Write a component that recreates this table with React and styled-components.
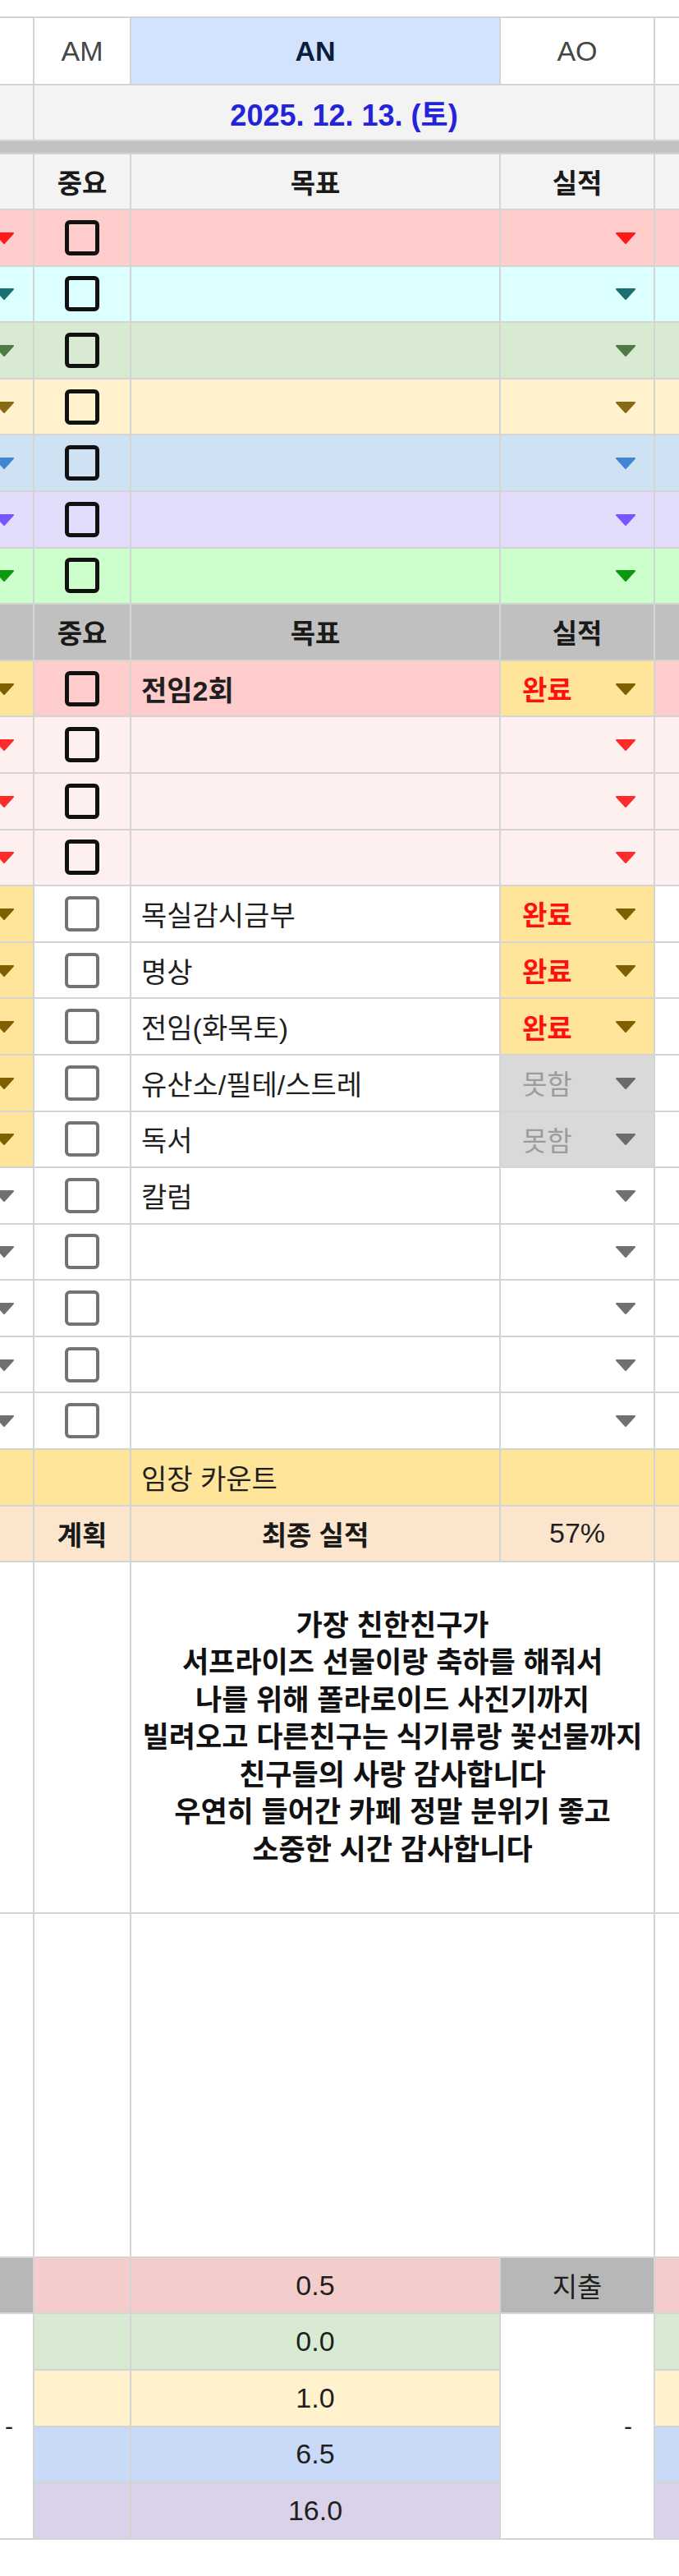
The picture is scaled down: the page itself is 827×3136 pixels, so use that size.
import React from 'react';
import styled, { createGlobalStyle } from 'styled-components';

const GlobalStyle = createGlobalStyle`
  html, body {
    margin: 0;
    padding: 0;
    background: #fff;
  }
  body {
    font-family: "Liberation Sans", "Noto Sans CJK KR", sans-serif;
    color: #1f1f1f;
    overflow-x: hidden;
  }
`;

const OLIVE = '#7f6000';
const RED = '#ff2a2a';
const GRAY = '#707070';

const TOP_ROWS = [
  { bg: '#ffcccc', arrow: '#ff1a1a' },
  { bg: '#dcffff', arrow: '#1b6f73' },
  { bg: '#d9ead3', arrow: '#4f7a48' },
  { bg: '#fff2cc', arrow: '#8a6914' },
  { bg: '#cfe2f3', arrow: '#3f86d4' },
  { bg: '#e3ddfc', arrow: '#7657ff' },
  { bg: '#ccffcc', arrow: '#0d990d' },
];

const STATUS = {
  done: { label: '완료', bg: '#ffe599', color: '#ff1010', bold: true, arrow: OLIVE },
  miss: { label: '못함', bg: '#d9d9d9', color: '#9c9c9c', bold: false, arrow: '#6b6b6b' },
};

const pinkRow = { side: '#fff0f0', sideArrow: RED, bg: '#fff0f0', box: 'dark', arrow: RED };
const emptyRow = { side: '#fff', sideArrow: GRAY, bg: '#fff', box: 'light', arrow: GRAY };

const TASKS = [
  { side: '#ffe599', sideArrow: OLIVE, bg: '#ffcccc', box: 'dark', text: '전임2회', bold: true, status: 'done' },
  pinkRow,
  pinkRow,
  pinkRow,
  { side: '#ffe599', sideArrow: OLIVE, bg: '#fff', box: 'light', text: '목실감시금부', status: 'done' },
  { side: '#ffe599', sideArrow: OLIVE, bg: '#fff', box: 'light', text: '명상', status: 'done' },
  { side: '#ffe599', sideArrow: OLIVE, bg: '#fff', box: 'light', text: '전임(화목토)', status: 'done' },
  { side: '#ffe599', sideArrow: OLIVE, bg: '#fff', box: 'light', text: '유산소/필테/스트레', status: 'miss' },
  { side: '#ffe599', sideArrow: OLIVE, bg: '#fff', box: 'light', text: '독서', status: 'miss' },
  { ...emptyRow, text: '칼럼' },
  emptyRow,
  emptyRow,
  emptyRow,
  emptyRow,
];

const TOTALS = [
  { value: '0.0', bg: '#d9ead3' },
  { value: '1.0', bg: '#fff2cc' },
  { value: '6.5', bg: '#c9daf8' },
  { value: '16.0', bg: '#d9d2e9' },
];

const MEMO = `가장 친한친구가
서프라이즈 선물이랑 축하를 해줘서
나를 위해 폴라로이드 사진기까지
빌려오고 다른친구는 식기류랑 꽃선물까지
친구들의 사랑 감사합니다
우연히 들어간 카페 정말 분위기 좋고
소중한 시간 감사합니다`;

const Sheet = styled.div`
  display: grid;
  grid-template-columns: 40px 116px 448px 186px 29px;
  grid-template-rows: 80px 66px 14px 66px repeat(24, 66.6px) 425.6px 417px repeat(5, 66.6px);
  gap: 2px;
  padding: 2px 0;
  margin-top: 20px;
  background: #d4d4d4;
`;

const Cell = styled.div`
  display: flex;
  align-items: center;
  justify-content: ${p => p.$justify || 'flex-start'};
  padding: ${p => p.$pad || '0'};
  background: ${p => p.$bg || '#fff'};
  grid-column: ${p => p.$span ? `span ${p.$span}` : 'auto'};
  grid-row: ${p => p.$rows ? `span ${p.$rows}` : 'auto'};
  overflow: hidden;
  min-width: 0;
  font-size: 33px;
  white-space: nowrap;
`;

const Letter = styled(Cell)`
  justify-content: center;
  font-size: 34px;
  color: ${p => p.$active ? '#0b1d3f' : '#444746'};
  font-weight: ${p => p.$active ? 700 : 400};
  background: ${p => p.$active ? '#d3e3fd' : '#fff'};
`;

const DateText = styled.span`
  font-size: 36px;
  font-weight: 700;
  color: #2323dc;
`;

const FreezeBar = styled.div`
  grid-column: 1 / -1;
  background: #c2c2c2;
`;

const HeadText = styled.span`
  font-weight: 700;
  color: #1a1a1a;
`;

const Label = styled.span`
  color: ${p => p.$color || '#1f1f1f'};
  font-weight: ${p => p.$bold ? 700 : 400};
`;

const Goal = styled(Label)`
  font-size: 34px;
`;

const Check = styled.span`
  box-sizing: border-box;
  width: 42px;
  height: 43px;
  border-radius: 6px;
  border: ${p => p.$tone === 'dark' ? '5px solid #111' : '4px solid #737373'};
`;

const Peek = styled.span`
  flex: 0 0 118px;
  text-align: center;
  font-weight: ${p => p.$bold ? 700 : 400};
  color: #1a1a1a;
`;

const Memo = styled.div`
  width: 100%;
  text-align: center;
  white-space: pre;
  font-size: 35px;
  font-weight: 700;
  line-height: 45.5px;
  color: #111;
`;

const Number = styled.span`
  font-size: 34px;
  color: #1f1f1f;
`;

const Dash = styled.span`
  font-size: 30px;
  color: #1f1f1f;
`;

function Arrow({ color }) {
  return (
    <svg width="26" height="15" viewBox="0 0 26 15" style={{ flexShrink: 0 }}>
      <polygon points="2,2 24,2 13,14" fill={color} stroke={color} strokeWidth="2" strokeLinejoin="round" />
    </svg>
  );
}

function SideDrop({ bg, color }) {
  return (
    <Cell $bg={bg} $justify="flex-end" $pad="0 22px 0 0">
      <Arrow color={color} />
    </Cell>
  );
}

function StatusDrop({ bg, arrow, status }) {
  const s = status ? STATUS[status] : null;
  return (
    <Cell $bg={s ? s.bg : bg} $justify={s ? 'space-between' : 'flex-end'} $pad="0 21px 0 26px">
      {s && <Label $color={s.color} $bold={s.bold}>{s.label}</Label>}
      <Arrow color={s ? s.arrow : arrow} />
    </Cell>
  );
}

function HeaderRow({ bg }) {
  return (
    <>
      <Cell $bg={bg} />
      <Cell $bg={bg} $justify="center"><HeadText>중요</HeadText></Cell>
      <Cell $bg={bg} $justify="center"><HeadText>목표</HeadText></Cell>
      <Cell $bg={bg} $justify="center"><HeadText>실적</HeadText></Cell>
      <Cell $bg={bg}><Peek $bold>중요</Peek></Cell>
    </>
  );
}

export default function App() {
  return (
    <>
      <GlobalStyle />
      <Sheet>
        <Letter />
        <Letter>AM</Letter>
        <Letter $active>AN</Letter>
        <Letter>AO</Letter>
        <Letter />

        <Cell $bg="#f3f3f3" />
        <Cell $bg="#f3f3f3" $span={3} $justify="center">
          <DateText>2025. 12. 13. (토)</DateText>
        </Cell>
        <Cell $bg="#f3f3f3" />

        <FreezeBar />

        <HeaderRow bg="#f3f3f3" />

        {TOP_ROWS.map((r, i) => (
          <React.Fragment key={'top' + i}>
            <SideDrop bg={r.bg} color={r.arrow} />
            <Cell $bg={r.bg} $justify="center"><Check $tone="dark" /></Cell>
            <Cell $bg={r.bg} />
            <StatusDrop bg={r.bg} arrow={r.arrow} />
            <Cell $bg={r.bg} />
          </React.Fragment>
        ))}

        <HeaderRow bg="#c0c0c0" />

        {TASKS.map((t, i) => (
          <React.Fragment key={'task' + i}>
            <SideDrop bg={t.side} color={t.sideArrow} />
            <Cell $bg={t.bg} $justify="center"><Check $tone={t.box} /></Cell>
            <Cell $bg={t.bg} $pad="0 0 0 12px">
              {t.text && <Goal $bold={t.bold}>{t.text}</Goal>}
            </Cell>
            <StatusDrop bg={t.bg} arrow={t.arrow} status={t.status} />
            <Cell $bg={t.bg} />
          </React.Fragment>
        ))}

        <Cell $bg="#ffe599" />
        <Cell $bg="#ffe599" />
        <Cell $bg="#ffe599" $pad="0 0 0 12px"><Goal>임장 카운트</Goal></Cell>
        <Cell $bg="#ffe599" />
        <Cell $bg="#ffe599" />

        <Cell $bg="#fce5cd" />
        <Cell $bg="#fce5cd" $justify="center"><HeadText>계획</HeadText></Cell>
        <Cell $bg="#fce5cd" $justify="center"><HeadText>최종 실적</HeadText></Cell>
        <Cell $bg="#fce5cd" $justify="center"><Number>57%</Number></Cell>
        <Cell $bg="#fce5cd"><Peek $bold>계획</Peek></Cell>

        <Cell />
        <Cell />
        <Cell $span={2}><Memo>{MEMO}</Memo></Cell>
        <Cell />

        <Cell />
        <Cell />
        <Cell $span={2} />
        <Cell />

        <Cell $bg="#b7b7b7" />
        <Cell $bg="#f4cccc" />
        <Cell $bg="#f4cccc" $justify="center"><Number>0.5</Number></Cell>
        <Cell $bg="#b7b7b7" $justify="center"><Label>지출</Label></Cell>
        <Cell $bg="#f4cccc" />

        {TOTALS.map((t, i) => (
          <React.Fragment key={'tot' + i}>
            {i === 0 && (
              <Cell $rows={4} $justify="flex-end" $pad="0 24px 0 0"><Dash>-</Dash></Cell>
            )}
            <Cell $bg={t.bg} />
            <Cell $bg={t.bg} $justify="center"><Number>{t.value}</Number></Cell>
            {i === 0 && (
              <Cell $rows={4} $justify="flex-end" $pad="0 26px 0 0"><Dash>-</Dash></Cell>
            )}
            <Cell $bg={t.bg} />
          </React.Fragment>
        ))}
      </Sheet>
    </>
  );
}
